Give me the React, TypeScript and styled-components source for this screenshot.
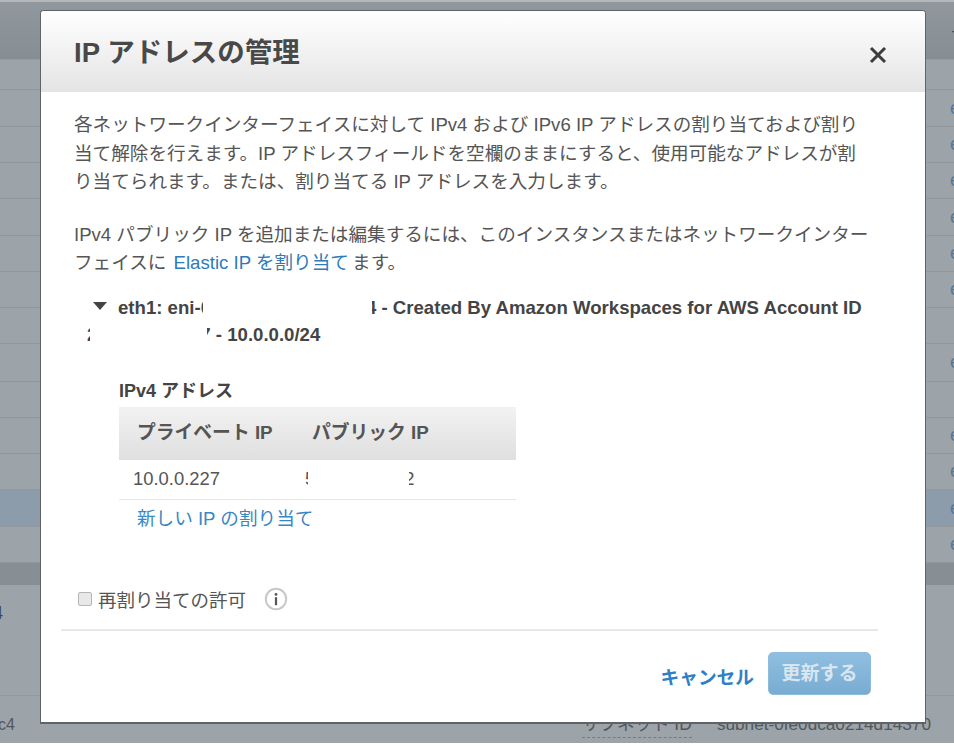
import styled, { createGlobalStyle } from 'styled-components';

const GlobalStyle = createGlobalStyle`
  html, body { margin: 0; padding: 0; background: #ffffff; }
  body {
    width: 954px;
    height: 746px;
    overflow: hidden;
    font-family: "Liberation Sans", "Noto Sans CJK JP", sans-serif;
  }
`;

const rows = [
  { id: 1, height: 30, mark: 'f' },
  { id: 2, height: 37, mark: 'e' },
  { id: 3, height: 36, mark: 'e' },
  { id: 4, height: 36, mark: 'e' },
  { id: 5, height: 37, mark: 'e' },
  { id: 6, height: 36, mark: 'e' },
  { id: 7, height: 36, mark: 'e' },
  { id: 8, height: 36, mark: 'f' },
  { id: 9, height: 38, mark: 'e' },
  { id: 10, height: 36, mark: 'f' },
  { id: 11, height: 36, mark: 'e' },
  { id: 12, height: 36, mark: 'e' },
  { id: 13, height: 37, mark: 'e', selected: true },
  { id: 14, height: 36, mark: 'e' },
];

export default function App() {
  return (
    <Page>
      <GlobalStyle />
      <Backdrop>
        <TableHead>
          <HeadMark>+</HeadMark>
        </TableHead>
        {rows.map((row) => (
          <TableRow key={row.id} $height={row.height} $selected={row.selected}>
            <RowMark>{row.mark}</RowMark>
          </TableRow>
        ))}
        <SplitBar />
        <DetailPane>
          <DetailFirst>4</DetailFirst>
          <DetailFoot>
            <DetailLast>c4</DetailLast>
            <SubnetLine>
              <SubnetLabel>サブネット ID</SubnetLabel>
              <span>subnet-0fe0dca0214d14370</span>
            </SubnetLine>
          </DetailFoot>
        </DetailPane>
      </Backdrop>

      <Modal>
        <ModalHead>
          <ModalTitle>IP アドレスの管理</ModalTitle>
          <CloseIcon width="20" height="20" viewBox="0 0 20 20">
            <path d="M3 3l14 14M17 3L3 17" />
          </CloseIcon>
        </ModalHead>

        <ModalBody>
          <Paragraph>
            各ネットワークインターフェイスに対して IPv4 および IPv6 IP アドレスの割り当ておよび割り
            <br />
            当て解除を行えます。IP アドレスフィールドを空欄のままにすると、使用可能なアドレスが割
            <br />
            り当てられます。または、割り当てる IP アドレスを入力します。
          </Paragraph>
          <Paragraph>
            IPv4 パブリック IP を追加または編集するには、このインスタンスまたはネットワークインター
            <br />
            フェイスに <TextLink>Elastic IP を割り当て</TextLink> ます。
          </Paragraph>

          <EniTitle>
            <Caret />
            <EniText>
              <EniLine>
                eth1: eni-0<Masked $width={169} $before={8} $after={6} />4 - Created By Amazon Workspaces for AWS Account ID
              </EniLine>
              <EniLine $outdent>
                2<Masked $width={117} $before={7} $after={7} />7 - 10.0.0.0/24
              </EniLine>
            </EniText>
          </EniTitle>

          <AddressBlock>
            <AddressLabel>IPv4 アドレス</AddressLabel>
            <AddressTable>
              <HeadRow>
                <HeadCell $width={175}>プライベート IP</HeadCell>
                <HeadCell>パブリック IP</HeadCell>
              </HeadRow>
              <BodyRow>
                <PrivateCell>10.0.0.227</PrivateCell>
                <PublicCell>
                  5<Masked $width={101} $before={7} $after={5} />2
                </PublicCell>
              </BodyRow>
            </AddressTable>
            <AssignLink>新しい IP の割り当て</AssignLink>
          </AddressBlock>

          <AllowRow>
            <CheckBox />
            <AllowText>再割り当ての許可</AllowText>
            <InfoIcon width="24" height="24" viewBox="0 0 24 24">
              <circle cx="12" cy="12" r="10.2" fill="#ffffff" stroke="#c8c8c8" strokeWidth="2" />
              <circle cx="12" cy="7.4" r="1.4" fill="#555555" />
              <rect x="10.9" y="10.2" width="2.2" height="8" fill="#555555" />
            </InfoIcon>
          </AllowRow>
        </ModalBody>

        <ModalFoot>
          <CancelLink>キャンセル</CancelLink>
          <UpdateButton>更新する</UpdateButton>
        </ModalFoot>
      </Modal>
    </Page>
  );
}

const Page = styled.div`
  position: relative;
  width: 954px;
  height: 746px;
  overflow: hidden;
`;

const Backdrop = styled.div`
  height: 743px;
  display: flex;
  flex-direction: column;
  background: #9ca3a9;
  border-top: 2px solid #b4b8bb;
  box-sizing: border-box;
  overflow: hidden;
`;

const TableHead = styled.div`
  flex: none;
  height: 58px;
  display: flex;
  align-items: center;
  justify-content: flex-end;
  background: linear-gradient(#90979d, #868d93);
  border-bottom: 1px solid #969ca1;
  box-sizing: border-box;
`;

const HeadMark = styled.span`
  margin-right: -6px;
  color: #4e5358;
  font-size: 15px;
`;

const TableRow = styled.div<{ $height: number; $selected?: boolean }>`
  flex: none;
  height: ${({ $height }) => $height}px;
  display: flex;
  align-items: center;
  justify-content: flex-end;
  background: ${({ $selected }) => ($selected ? '#8d9cab' : '#9ca3a9')};
  border-bottom: 1px solid #90979d;
  box-sizing: border-box;
`;

const RowMark = styled.span`
  margin-right: -6px;
  color: #55779a;
  font-size: 18px;
`;

const SplitBar = styled.div`
  flex: none;
  height: 22px;
  background: #878e94;
`;

const DetailPane = styled.div`
  flex: 1;
  display: flex;
  flex-direction: column;
  justify-content: space-between;
  color: #52575b;
`;

const DetailFirst = styled.span`
  margin: 18px 0 0 -7px;
  color: #3f4347;
  font-size: 18px;
  line-height: 20px;
`;

const DetailFoot = styled.div`
  height: 48px;
  display: flex;
  border-top: 1px solid #92999e;
  box-sizing: border-box;
`;

const DetailLast = styled.span`
  flex: 0 0 582px;
  margin: 19px 0 0 -2px;
  font-size: 16px;
  line-height: 20px;
`;

const SubnetLine = styled.div`
  display: flex;
  gap: 25px;
  margin: 18px 0 0 2px;
  font-size: 17.2px;
  line-height: 20px;
  white-space: nowrap;
`;

const SubnetLabel = styled.span`
  height: 23px;
  font-size: 17.5px;
  border-bottom: 1px dashed #777c80;
`;

const Modal = styled.section`
  position: absolute;
  left: 40px;
  top: 10px;
  width: 886px;
  height: 714px;
  display: flex;
  flex-direction: column;
  box-sizing: border-box;
  background: #ffffff;
  border: 1px solid #5f6468;
  border-bottom-width: 2px;
  border-radius: 4px 4px 0 0;
`;

const ModalHead = styled.header`
  flex: none;
  height: 81px;
  padding: 0 37px 0 33px;
  display: flex;
  align-items: center;
  justify-content: space-between;
  background: linear-gradient(#ffffff, #e4e4e4);
  border-radius: 3px 3px 0 0;
`;

const ModalTitle = styled.h2`
  margin: 0 0 4px;
  color: #484848;
  font-size: 27.5px;
  font-weight: 700;
`;

const CloseIcon = styled.svg`
  fill: none;
  stroke: #3c3c3c;
  stroke-width: 3;
  margin-top: 6px;
`;

const ModalBody = styled.div`
  flex: 1;
  padding: 19px 33px 0;
  color: #555555;
`;

const Paragraph = styled.p`
  margin: 0 0 24px;
  font-size: 18.6px;
  line-height: 28.5px;
  white-space: nowrap;
`;

const TextLink = styled.a`
  margin: 0 -2px 0 2px;
  color: #2f7ab8;
`;

const EniTitle = styled.div`
  display: flex;
  margin: -8px 0 0 19px;
  color: #444444;
  font-size: 18.6px;
  font-weight: 700;
`;

const Caret = styled.i`
  flex: none;
  width: 0;
  height: 0;
  margin: 8px 11px 0 0;
  border-left: 7px solid transparent;
  border-right: 7px solid transparent;
  border-top: 8px solid #444444;
`;

const EniText = styled.div`
  line-height: 27px;
`;

const EniLine = styled.div<{ $outdent?: boolean }>`
  white-space: nowrap;
  margin-left: ${({ $outdent }) => ($outdent ? '-31px' : '0')};
`;

/* white redaction laid over the ends of the digits next to it */
const Masked = styled.span<{ $width: number; $before: number; $after: number }>`
  position: relative;
  display: inline-block;
  width: ${({ $width }) => $width}px;
  height: 1.3em;
  margin: 0 ${({ $after }) => -$after}px 0 ${({ $before }) => -$before}px;
  vertical-align: -0.3em;
  background: #ffffff;
`;

const AddressBlock = styled.div`
  margin: 30px 0 0 45px;
  width: 397px;
`;

const AddressLabel = styled.div`
  margin-bottom: 2px;
  color: #444444;
  font-size: 18px;
  font-weight: 700;
  line-height: 27px;
`;

const AddressTable = styled.div`
  display: flex;
  flex-direction: column;
`;

const HeadRow = styled.div`
  height: 53px;
  display: flex;
  align-items: center;
  padding: 0 0 5px 18px;
  box-sizing: border-box;
  background: linear-gradient(#f2f2f2, #dfdfdf);
`;

const HeadCell = styled.div<{ $width?: number }>`
  flex: ${({ $width }) => ($width ? `0 0 ${$width}px` : '1')};
  color: #555555;
  font-size: 18.8px;
  font-weight: 700;
`;

const BodyRow = styled.div`
  height: 40px;
  padding-bottom: 1px;
  display: flex;
  align-items: center;
  border-bottom: 1px solid #e6e6e6;
  box-sizing: border-box;
  color: #555555;
  font-size: 18.4px;
`;

const PrivateCell = styled.div`
  flex: 0 0 186px;
  padding-left: 14px;
  box-sizing: border-box;
`;

const PublicCell = styled.div`
  white-space: nowrap;
`;

const AssignLink = styled.a`
  display: block;
  margin: 7px 0 0 18px;
  color: #3b87c4;
  font-size: 18.6px;
  line-height: 24px;
`;

const AllowRow = styled.div`
  display: flex;
  align-items: center;
  margin: 55px 0 0 4px;
`;

const CheckBox = styled.i`
  width: 12px;
  height: 12px;
  border: 1px solid #b5b5b5;
  border-radius: 2px;
  background: #e8e8e8;
`;

const AllowText = styled.span`
  margin-left: 6px;
  color: #555555;
  font-size: 18.5px;
`;

const InfoIcon = styled.svg`
  margin-left: 18px;
`;

const ModalFoot = styled.footer`
  flex: none;
  height: 93px;
  margin: 0 47px 0 20px;
  padding: 21px 7px 0 0;
  display: flex;
  justify-content: flex-end;
  align-items: flex-start;
  gap: 14px;
  border-top: 2px solid #e8e8e8;
  box-sizing: border-box;
`;

const CancelLink = styled.a`
  margin-top: 10px;
  color: #2f7fc6;
  font-size: 18.7px;
  font-weight: 700;
`;

const UpdateButton = styled.button`
  width: 103px;
  height: 43px;
  padding: 0 0 5px;
  border: 1px solid #8fbbdc;
  border-radius: 5px;
  background: linear-gradient(#8fbfe0, #79acd3);
  color: #d9e6ef;
  font-family: inherit;
  font-size: 19px;
  font-weight: 700;
`;
